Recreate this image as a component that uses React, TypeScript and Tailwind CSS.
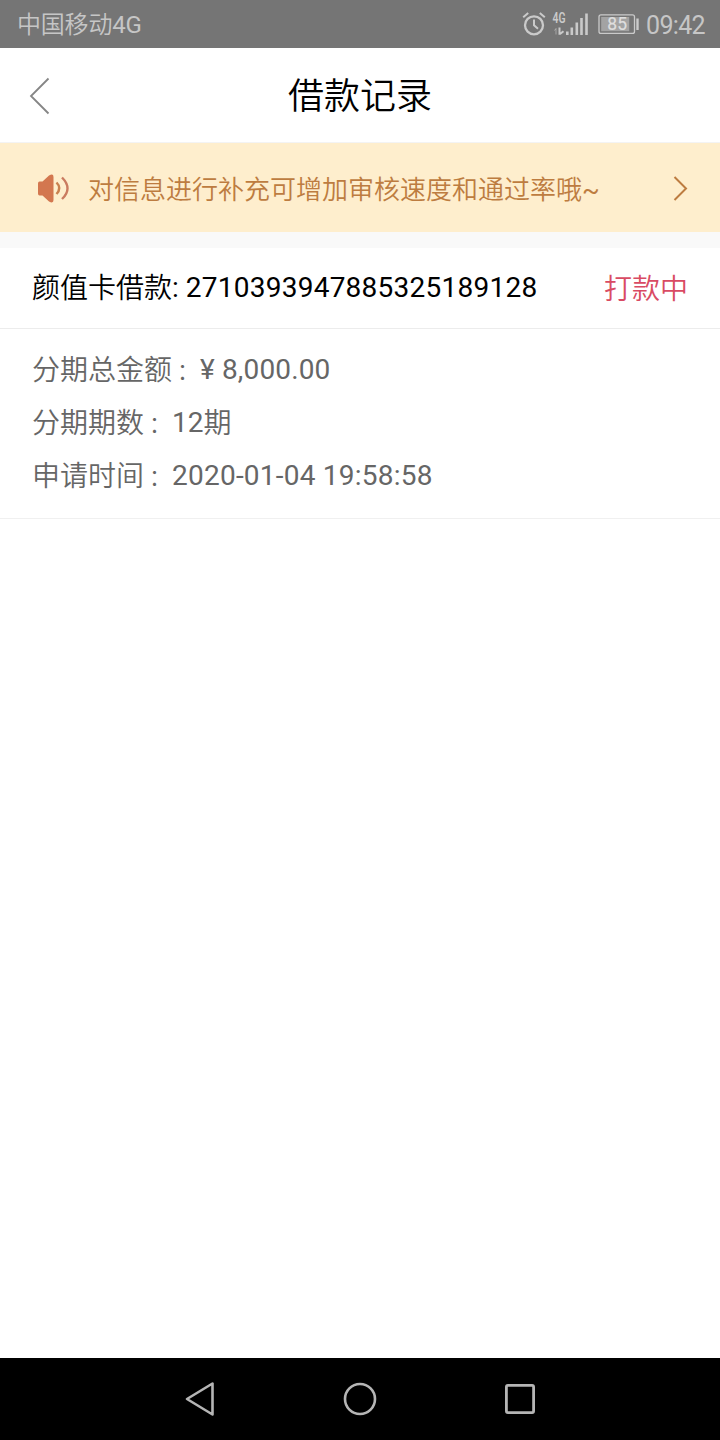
import type { ReactNode } from "react";

function StatusBar() {
  return (
    <header className="flex h-12 items-center justify-between bg-[#757575] pl-[17px] pr-[15px] text-[#c6c6c6]">
      <span className="pt-[3px] text-2xl leading-[45px] tracking-[-0.2px]">中国移动4G</span>
      <div className="flex h-12 items-center">
        <svg className="h-12 w-[126px]" viewBox="0 0 126 48" fill="none" stroke="#cacaca">
          <circle cx="14" cy="25.3" r="9" strokeWidth="2.3" />
          <path d="M14 19.5v5.8l4 3.4" strokeWidth="2" />
          <path d="M3.2 17.2l5-4.2M24.8 17.2l-5-4.2" strokeWidth="2" />
          <path d="M47.3 31.5v3.5M51.8 27.5v7.5M56.8 22.5v12.5M61.5 18v17M66.5 13.5v21.5" strokeWidth="2.6" />
          <path d="M36 28.5v6M34.5 30.5l1.5-2" strokeWidth="1" opacity="0.6" />
          <path d="M39.5 27.5v7.3M43.5 31.2l-3.5 2.8" strokeWidth="2" />
          <text x="32.5" y="23.3" fontSize="14.5" fontWeight="600" fontFamily="Roboto, sans-serif" fill="#cacaca" stroke="none" textLength="13" lengthAdjust="spacingAndGlyphs">4G</text>
          <rect x="79" y="14.8" width="35.5" height="18.6" rx="2" strokeWidth="1.3" />
          <rect x="81.2" y="17" width="28" height="14.2" fill="#a3a3a3" stroke="none" />
          <path d="M117.5 18.5v11.5" strokeWidth="2.4" />
          <text x="97.2" y="30.2" fontSize="17.5" fontWeight="400" fontFamily="Roboto, sans-serif" fill="#dedede" stroke="#dedede" strokeWidth="0.2" textAnchor="middle">85</text>
        </svg>
        <span className="pt-[3px] text-[25px] leading-[45px] tracking-[-0.65px]">09:42</span>
      </div>
    </header>
  );
}

function Detail({ label, children }: { label: string; children: ReactNode }) {
  return (
    <p className="h-[53px] leading-[53px]">
      <span className="align-[-1px] leading-none">{label}</span>
      <span className="inline-block w-7 pl-[5px] text-[22px] leading-none">：</span>
      {children}
    </p>
  );
}

export default function App() {
  return (
    <div className="flex h-[1440px] w-[720px] flex-col overflow-hidden bg-white font-['Roboto','Noto_Sans_CJK_SC_DemiLight','Noto_Sans_CJK_SC',sans-serif] text-[28px] text-black" lang="zh-CN">
      <StatusBar />
      <div className="grid h-[95px] grid-cols-[80px_1fr_80px] items-center border-b border-[#f3f3f3]">
        <svg className="h-10 w-20" viewBox="0 0 80 40" fill="none" stroke="#858585" strokeWidth="1.8">
          <path d="M48.5 3.5L31 21l17.5 17.5" />
        </svg>
        <h1 className="pt-[4px] text-center text-4xl leading-[88px]">借款记录</h1>
      </div>
      <div className="flex h-[89px] items-center bg-[#feeecd] text-[#bd7c40]">
        <svg className="h-10 w-[88px]" viewBox="0 0 88 40" fill="none">
          <path d="M39.5 13.5h3l6.5-6q4.5-2.5 4.5 1.5v23q0 4-4.5 1.5l-6.5-6h-3q-1.5 0-1.5-2v-10q0-2 1.5-2z" fill="#d3774f" />
          <path d="M56.5 14.5q5.5 5.5 0 11.5" stroke="#c9814f" strokeWidth="2.4" />
          <path d="M62 9.5q11 11 0 21.500" stroke="#ca7b60" strokeWidth="2.4" />
        </svg>
        <span className="flex-1 pt-[5px] text-[26px] leading-[38px]">对信息进行补充可增加审核速度和通过率哦~</span>
        <svg className="h-10 w-[50px]" viewBox="0 0 50 40" fill="none" stroke="#bd7c40" strokeWidth="2">
          <path d="M4.5 9L16 20.5 4.5 32" />
        </svg>
      </div>
      <div className="h-4 bg-[#f9f9f9]" />
      <div className="flex h-[81px] items-center justify-between border-b border-[#ececec] px-8">
        <span className="leading-[42px]">
          <span className="align-[-1px] leading-none">颜值卡借款</span>: <span className="tracking-[0.25px]">2710393947885325189128</span>
        </span>
        <span className="pt-[3px] text-[#d94b63]">打款中</span>
      </div>
      <div className="h-[190px] border-b border-[#f0f0f0] px-8 pt-[14px] text-[#666]">
        <Detail label="分期总金额"><span className="tracking-[0.15px]">¥ 8,000.00</span></Detail>
        <Detail label="分期期数">12<span className="align-[-1px] leading-none">期</span></Detail>
        <Detail label="申请时间"><span className="tracking-[0.23px]">2020-01-04 19:58:58</span></Detail>
      </div>
      <main className="flex-1" />
      <nav className="flex h-[82px] items-center justify-center gap-[120px] bg-black">
        <svg className="size-10" viewBox="0 0 40 40" fill="none" stroke="#b5b5b5" strokeWidth="2.6" strokeLinejoin="round">
          <path d="M32.5 4.5v31L7 20z" />
        </svg>
        <svg className="size-10" viewBox="0 0 40 40" fill="none" stroke="#b5b5b5" strokeWidth="2.6">
          <circle cx="20" cy="20" r="15" />
        </svg>
        <svg className="size-10" viewBox="0 0 40 40" fill="none" stroke="#b5b5b5" strokeWidth="2.8">
          <rect x="6.4" y="6.4" width="27.2" height="27.2" rx="1.5" />
        </svg>
      </nav>
    </div>
  );
}
